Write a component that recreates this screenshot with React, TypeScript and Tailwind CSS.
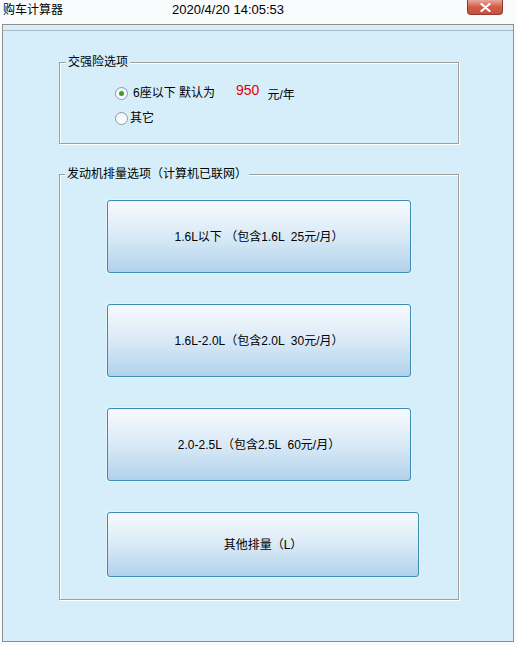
import React from "react";

const BUTTONS = [
  { label: "1.6L以下 （包含1.6L  25元/月）", w: "w-[304px]", h: "h-[73px]", mt: "mt-[25px]" },
  { label: "1.6L-2.0L（包含2.0L  30元/月）", w: "w-[304px]", h: "h-[73px]", mt: "mt-[31px]" },
  { label: "2.0-2.5L（包含2.5L  60元/月）", w: "w-[304px]", h: "h-[73px]", mt: "mt-[31px]" },
  { label: "其他排量（L）", w: "w-[312px]", h: "h-[65px]", mt: "mt-[31px]" },
];

function Radio({ checked }: { checked?: boolean }) {
  return (
    <span className="w-[13px] h-[13px] rounded-full border border-[#8a9bb0] bg-gradient-to-b from-[#eef2f6] to-white flex items-center justify-center shrink-0">
      {checked && <span className="w-[5px] h-[5px] rounded-full bg-[#3f9a2c]" />}
    </span>
  );
}

export default function App() {
  return (
    <div
      className="w-[516px] h-[645px] bg-[#fafbfc] text-[12px] text-black overflow-hidden"
      style={{ fontFamily: '"Liberation Sans", "Noto Sans CJK SC", sans-serif' }}
    >
      {/* Title bar */}
      <div className="h-[24px] flex items-start relative">
        <span className="ml-[3px] mt-[2px] leading-[16px]">购车计算器</span>
        <span className="ml-[109px] mt-[2px] leading-[16px] text-[13px]">2020/4/20 14:05:53</span>
        <div className="absolute left-[467px] top-0 w-[36px] h-[15px] rounded-b-[4px] border border-t-0 border-[#8a3a32] bg-gradient-to-b from-[#e8a89c] via-[#d05c48] to-[#c8503c] flex items-center justify-center">
          <svg width="11" height="9" viewBox="0 0 11 9">
            <path d="M1.5 1 L9.5 8 M9.5 1 L1.5 8" stroke="white" strokeWidth="2.2" strokeLinecap="round" />
          </svg>
        </div>
      </div>

      {/* Main panel */}
      <div className="ml-[2px] w-[512px] h-[618px] border border-[#8e8e8e] bg-[#d5eefa]">
        <div className="h-[6px] border-b border-[#a9b8c2]" />

        {/* 交强险选项 */}
        <div className="relative ml-[56px] mt-[31px] w-[400px] h-[82px] border border-[#a0a0a0] shadow-[inset_1px_1px_0_white,1px_1px_0_white]">
          <span className="absolute -top-[8px] left-[6px] px-[2px] bg-[#d5eefa] leading-[14px]">交强险选项</span>
          <div className="flex items-center ml-[55px] mt-[23px] h-[14px]">
            <Radio checked />
            <span className="ml-[5px] leading-[14px]">6座以下 默认为</span>
            <span className="ml-[21px] text-[14px] text-[#e00000] leading-[14px] -mt-[6px]">950</span>
            <span className="ml-[8px] leading-[14px] mt-[4px]">元/年</span>
          </div>
          <div className="flex items-center ml-[55px] mt-[11px] h-[14px]">
            <Radio />
            <span className="ml-[2px] leading-[14px]">其它</span>
          </div>
        </div>

        {/* 发动机排量选项 */}
        <div className="relative ml-[56px] mt-[30px] w-[400px] h-[426px] border border-[#a0a0a0] shadow-[inset_1px_1px_0_white,1px_1px_0_white] flex flex-col">
          <span className="absolute -top-[8px] left-[5px] px-[2px] bg-[#d5eefa] leading-[14px]">发动机排量选项（计算机已联网）</span>
          {BUTTONS.map((b) => (
            <button
              key={b.label}
              className={`${b.w} ${b.h} ${b.mt} ml-[47px] rounded-[3px] border border-[#3d8cb4] bg-gradient-to-b from-[#f7fafd] via-[#d9eaf7] to-[#b1d1ea] shadow-[0_0_0_1px_#e3f3fb] flex items-center justify-center text-[12px] text-black whitespace-pre`}
              style={{ fontFamily: '"Liberation Sans", "Noto Sans CJK SC", sans-serif' }}
            >
              {b.label}
            </button>
          ))}
        </div>
      </div>
    </div>
  );
}
